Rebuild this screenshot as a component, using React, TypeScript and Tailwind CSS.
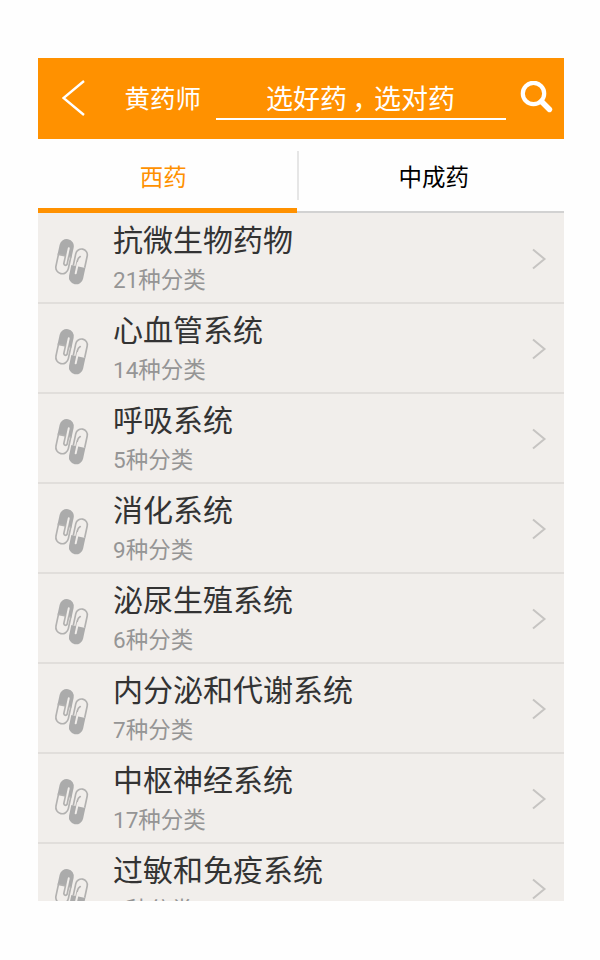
const categories = [
  { name: '抗微生物药物', count: 21 },
  { name: '心血管系统', count: 14 },
  { name: '呼吸系统', count: 5 },
  { name: '消化系统', count: 9 },
  { name: '泌尿生殖系统', count: 6 },
  { name: '内分泌和代谢系统', count: 7 },
  { name: '中枢神经系统', count: 17 },
  { name: '过敏和免疫系统', count: 6 },
];

function CapsuleIcon() {
  return (
    <svg className="ml-[13px] h-[54px] w-[40px] shrink-0" viewBox="0 0 120 162" fill="none">
      {/* rear capsule: outlined top, solid bottom */}
      <g transform="rotate(12 81 92)">
        <path d="M67 94V58a17.500 17.500 0 0 1 35 0V94" stroke="#b2b1b0" strokeWidth="5" />
        <path d="M61 94h43v33a21.500 21.500 0 0 1-43 0z" fill="#ababab" />
        <path d="M76 94V78q0-9 6-14" stroke="#b2b1b0" strokeWidth="5" strokeLinecap="round" />
        <path d="M79 84v32" stroke="#f1eeeb" strokeWidth="6" strokeLinecap="round" />
      </g>
      {/* front capsule: solid top, outlined bottom */}
      <g transform="rotate(12 41 64)">
        <path d="M19 64V33a21.500 21.500 0 0 1 43 0V64z" fill="#ababab" />
        <path d="M21.500 62v36a19 19 0 0 0 38 0V62z" fill="#f1eeeb" stroke="#b2b1b0" strokeWidth="5" />
        <path d="M48 38v28" stroke="#f1eeeb" strokeWidth="6" strokeLinecap="round" />
        <path d="M43 62v24q5 8 10 0V62" stroke="#b2b1b0" strokeWidth="5" strokeLinecap="round" />
      </g>
    </svg>
  );
}

function CategoryRow({ name, count }: { name: string; count: number }) {
  return (
    <li className="flex h-[90px] shrink-0 items-start border-b-2 border-[#e1dedb]">
      <div className="pt-[21px]">
        <CapsuleIcon />
      </div>
      <div className="ml-[22.5px] flex h-full flex-1 flex-col whitespace-nowrap">
        <span className="mt-[7px] h-10 text-[30px] leading-10 text-[#333]">{name}</span>
        <span className="h-[38px] text-[22.5px] leading-[38px] text-[#959595]">{count}种分类</span>
      </div>
      <svg className="mr-[17px] mt-[34px] h-[22px] w-[16px]" viewBox="0 0 16 22" fill="none">
        <path d="M2 1.5 13.5 11 2 20.500" stroke="#c6c4c2" strokeWidth="2" />
      </svg>
    </li>
  );
}

export default function App() {
  return (
    <div className="h-[960px] w-[600px] overflow-hidden bg-[#fefefe] pl-[37.5px] pt-[58px] font-[Roboto,'Noto_Sans_CJK_SC',sans-serif]">
      <main className="flex h-[842.5px] w-[526.5px] flex-col overflow-hidden bg-[#f1eeeb]">
        <header className="flex h-[80.5px] shrink-0 items-center bg-[#ff9100] text-white">
          <svg className="ml-[24px] h-[38px] w-[24px]" viewBox="0 0 24 38" fill="none">
            <path d="M22 2 1.5 19 22 36" stroke="white" strokeWidth="2.4" />
          </svg>
          <h1 className="ml-[39px] w-[78px] whitespace-nowrap pt-[2px] text-[25.5px] font-normal">黄药师</h1>
          <div className="ml-[13px] mt-[1px] flex h-[43px] w-[290px] justify-center border-b-2 border-white pt-[3px] text-[27px] leading-[41px]">
            <span>选好药</span>
            <span className="w-[27px] pr-[3px] text-center [font-feature-settings:'halt']">，</span>
            <span>选对药</span>
          </div>
          <svg className="ml-[14px] h-[34px] w-[34px]" viewBox="0 0 34 34" fill="none">
            <circle cx="13.5" cy="12.5" r="10.7" stroke="white" strokeWidth="4.2" />
            <path d="M21.5 20.500 29.500 28.500" stroke="white" strokeWidth="5.4" strokeLinecap="round" />
          </svg>
        </header>
        <nav className="flex h-[74.5px] shrink-0 bg-[#fefefe] text-[23.5px]">
          <div className="flex w-[259.5px] flex-col border-b-[5px] border-[#ff9100] text-[#ff9100]">
            <span className="mt-[19px] -translate-x-[4px] text-center leading-10">西药</span>
          </div>
          <div className="flex flex-1 border-b-2 border-[#d2d2d2] text-black">
            <div className="mt-3 h-[49px] w-[1.5px] bg-[#e6e6e6]" />
            <span className="mt-[19px] flex-1 pl-[5px] text-center leading-10">中成药</span>
          </div>
        </nav>
        <ul className="pt-px">
          {categories.map((item) => (
            <CategoryRow key={item.name} {...item} />
          ))}
        </ul>
      </main>
    </div>
  );
}
